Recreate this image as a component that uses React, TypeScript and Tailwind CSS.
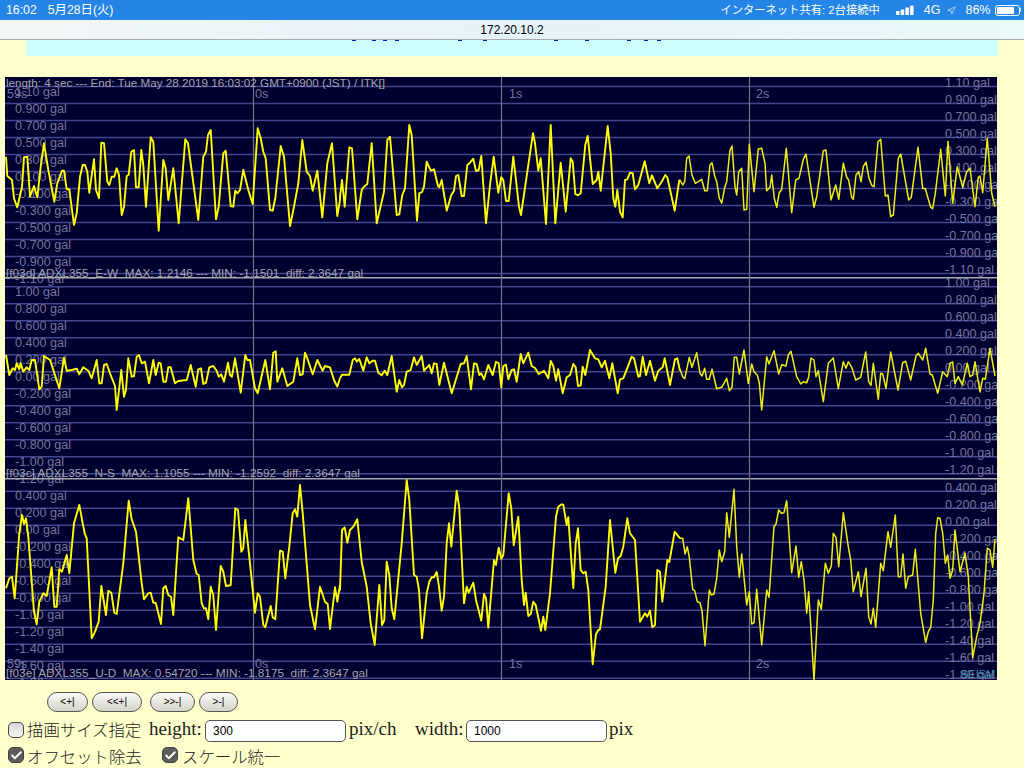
import React from 'react';
import { Check, Navigation } from 'lucide-react';

// traces were read off the screen in three crops per channel: "x,y" in crop pixels (3x)
const TRACES = [
  {
    y0: 100,
    parts: [
      '18,170 22,228 36,240 42,295 52,322 66,260 72,172 82,170 90,290 102,258 112,292 122,200 132,130 145,210 163,305 172,250 186,212 192,212 200,268 208,268 222,375 230,340 240,230 248,195 255,195 262,215 268,278 282,178 288,270 297,295 304,128 312,130 322,245 328,255 335,230 343,230 350,205 357,225 365,345 372,320 380,228 386,224 394,155 402,150 408,262 416,262 424,150 430,195 438,320 452,112 460,125 476,392 490,180 497,205 505,300 520,205 536,370 556,118 564,130 595,360 610,170 618,155 624,105 632,90 648,358 656,320 670,160 677,152 692,318 700,320 706,272 712,280 720,270 730,210 745,270 758,312 773,85 782,115 790,155 797,175 810,330 818,332 826,295 842,138 852,170 870,378 882,320 895,250 907,120 920,215 930,228 938,272 952,212 967,352 982,190 996,130 1012,348 1020,300',
      '0,290 6,240 14,320 28,142 36,145 52,358 65,270 72,260 82,252 95,130 110,370 132,275 142,120 150,110 170,345 178,343 187,285 195,265 208,75 215,105 231,362 238,280 246,276 252,260 260,185 272,212 282,208 294,258 298,262 305,240 320,332 334,285 342,272 348,228 355,225 365,288 372,288 382,195 390,188 400,176 408,213 416,210 424,168 438,370 450,255 461,170 475,278 484,232 490,240 498,303 506,303 520,170 537,320 543,345 565,195 579,100 585,130 595,212 602,175 618,372 632,75 646,370 662,188 677,335 692,175 698,185 706,282 714,286 722,280 736,135 743,108 758,252 770,240 775,215 782,272 803,78 812,160 820,295 826,320 832,270 840,335 848,352 855,240 862,238 870,218 878,220 885,268 895,255 914,184 928,250 936,226 952,265 965,245 976,225 982,232 1004,332 1018,240',
      '0,240 8,255 14,245 20,175 27,168 36,225 46,250 55,245 65,238 74,272 82,272 90,195 96,188 104,228 110,245 118,295 125,310 134,262 140,245 150,150 156,138 165,260 170,285 176,215 185,205 192,330 200,328 208,133 222,275 235,147 245,145 255,190 260,272 270,262 275,225 283,295 290,322 298,278 305,268 319,145 335,338 347,240 357,235 370,178 378,162 402,322 410,290 430,152 438,150 453,300 467,255 476,298 490,190 500,232 506,240 515,292 520,298 528,225 536,215 543,245 550,200 558,186 567,235 575,256 582,260 594,125 602,118 616,288 624,285 632,350 640,345 655,175 662,162 686,300 694,292 714,142 728,265 736,266 752,322 758,326 766,280 782,148 796,288 804,124 818,310 832,200 848,262 860,215 870,205 885,320 895,232 900,228 908,278 922,115 935,280 945,320',
    ],
  },
  {
    y0: 280,
    parts: [
      '18,225 28,285 38,265 45,270 50,250 58,268 62,250 70,275 80,262 88,270 95,240 105,240 118,328 125,320 132,228 150,240 178,325 192,233 200,272 215,270 230,266 238,283 250,262 265,272 275,295 290,240 298,310 305,310 312,255 320,252 330,280 345,318 350,390 364,270 372,350 378,330 385,235 395,290 402,288 410,230 417,225 425,250 435,245 447,310 460,240 467,285 476,248 482,250 490,305 498,305 505,262 512,262 525,310 535,303 560,300 572,255 587,320 595,268 603,265 610,312 618,308 628,262 640,258 650,272 656,290 664,283 672,305 684,248 690,285 696,290 705,235 722,338 736,225 742,240 750,240 765,325 773,340 796,240 810,328 820,218 827,214 832,305 847,265 862,318 880,305 892,235 900,285 908,283 915,218 922,235 938,283 952,240 968,272 975,258 990,262 1002,300 1012,320 1020,295',
      '0,295 6,284 14,284 28,284 38,240 45,235 50,245 58,237 70,272 80,232 88,250 98,242 105,242 115,278 125,286 134,272 142,285 155,228 170,335 178,300 186,322 192,315 200,275 212,270 222,232 230,255 245,228 252,272 268,255 275,280 282,250 290,252 298,315 312,248 335,340 362,252 372,250 380,228 393,328 402,250 410,252 418,285 424,280 432,298 445,255 458,285 468,245 476,250 484,322 490,258 498,254 505,298 515,270 522,268 530,305 542,222 550,250 565,218 575,258 585,264 596,282 612,272 625,295 632,243 640,258 648,302 655,268 668,340 680,292 690,285 700,252 707,262 714,318 722,316 728,260 736,285 750,210 765,235 775,238 785,262 795,242 808,295 817,250 833,340 840,298 850,295 875,230 882,235 895,290 900,288 908,230 918,285 930,243 945,302 955,272 968,262 974,235 990,315 1005,238 1012,235 1020,272',
      '0,268 8,290 14,296 28,232 36,262 50,218 60,280 66,288 74,265 80,298 88,298 96,268 110,326 125,322 140,295 148,332 156,322 163,232 170,232 178,282 192,210 205,310 215,252 222,275 232,285 238,310 245,390 260,230 267,252 282,212 296,282 305,254 318,258 325,225 333,214 350,290 362,312 370,305 380,308 386,290 393,234 402,240 408,290 415,272 430,365 445,250 460,234 475,326 490,245 498,265 505,245 515,262 527,300 542,292 557,216 566,305 573,316 580,250 595,358 602,280 608,282 618,325 632,216 654,330 668,248 677,244 692,300 708,228 715,220 728,240 737,205 750,282 757,285 773,340 788,275 802,290 810,250 818,246 825,310 835,290 847,315 862,250 870,290 878,285 885,245 900,336 908,295 916,298 930,205 945,288',
    ],
  },
  {
    y0: 480,
    parts: [
      '18,325 28,295 36,290 44,355 58,160 66,105 72,132 78,115 85,170 102,395 110,433 118,365 130,340 140,348 155,262 163,380 170,380 178,268 186,275 200,225 208,280 222,130 238,75 248,130 254,160 260,175 275,475 285,455 296,425 304,318 318,405 325,332 334,338 343,398 350,402 370,250 386,62 395,118 408,155 425,310 432,358 445,340 452,338 460,368 467,368 483,432 490,325 497,318 505,345 513,350 520,405 535,172 550,180 565,55 580,240 590,282 596,285 605,370 612,385 618,385 625,418 632,320 640,345 648,450 662,258 670,275 678,318 692,316 706,85 714,90 724,215 730,205 736,120 750,250 765,398 773,340 780,350 790,435 796,442 812,378 818,412 826,418 840,212 848,215 856,295 868,200 878,100 885,88 892,110 900,15 908,100 930,375 945,448 960,320 975,365 983,372 990,447 1005,322 1012,365 1020,315',
      '0,330 6,150 14,142 22,188 30,150 40,140 52,118 65,245 80,320 92,430 104,495 118,315 126,435 133,420 140,245 148,285 155,385 163,418 185,190 200,0 208,60 222,285 230,290 237,330 246,475 260,340 268,305 275,292 282,292 290,276 297,320 305,392 312,350 320,190 327,130 334,200 350,32 358,85 372,370 380,320 386,338 400,308 408,360 424,422 432,342 438,355 445,443 462,240 468,255 476,203 484,236 490,225 506,40 514,85 521,196 535,110 545,300 552,375 557,338 565,408 572,402 580,365 587,375 603,452 610,410 616,450 630,340 648,110 655,80 665,73 670,74 680,135 685,112 700,325 707,190 714,145 722,270 730,280 737,275 745,330 758,553 768,462 775,450 780,448 797,320 810,120 826,278 834,235 842,228 850,200 862,115 870,160 885,180 900,425 915,400 922,410 930,392 937,442 945,435 952,270 960,275 967,365 982,240 988,246 1004,155 1020,175',
      '0,175 8,175 15,222 22,200 28,232 38,328 44,332 52,365 60,368 66,392 75,497 88,330 94,345 102,342 110,295 118,210 125,245 134,215 140,98 148,172 162,28 170,200 178,292 185,222 200,375 208,335 215,432 222,428 230,328 245,495 260,330 267,352 282,140 288,132 296,90 304,100 312,98 320,62 335,278 348,198 356,292 364,245 372,300 380,400 386,335 402,600 415,360 424,388 436,250 445,280 454,258 460,160 468,172 476,260 490,98 505,200 512,240 520,335 535,275 543,350 558,265 566,410 573,432 580,385 587,442 602,250 610,272 624,155 632,202 646,105 655,290 662,290 669,222 677,325 685,290 698,285 706,208 722,400 737,487 745,455 752,442 760,360 767,160 773,113 780,115 788,160 796,250 803,225 810,295 818,270 825,150 840,275 855,220 865,290 878,533 890,470 900,430 912,340 922,204 930,210 938,262 945,178',
    ],
  },
];

const CROP_X = [0, 340, 680];
const CHART_LEFT = 5;
const CHART_TOP = 77;

const CHANNELS = [
  {
    gridTop: 9.5,
    info: '[f03d] ADXL355_E-W  MAX: 1.2146 --- MIN: -1.1501  diff: 2.3647 gal',
    infoY: 199.5,
    scale: ['1.10', '0.900', '0.700', '0.500', '0.300', '0.100', '-0.100', '-0.300', '-0.500', '-0.700', '-0.900', '-1.10'],
  },
  {
    gridTop: 209.7,
    info: '[f03c] ADXL355_N-S  MAX: 1.1055 --- MIN: -1.2592  diff: 2.3647 gal',
    infoY: 399.5,
    scale: ['1.00', '0.800', '0.600', '0.400', '0.200', '0.00', '-0.200', '-0.400', '-0.600', '-0.800', '-1.00', '-1.20'],
  },
  {
    gridTop: 414.3,
    info: '[f03e] ADXL355_U-D  MAX: 0.54720 --- MIN: -1.8175  diff: 2.3647 gal',
    infoY: 599.5,
    scale: ['0.400', '0.200', '0.00', '-0.200', '-0.400', '-0.600', '-0.800', '-1.00', '-1.20', '-1.40', '-1.60', '-1.80'],
  },
];

const TIME_MARKS = [
  { label: '59s', x: 2 },
  { label: '0s', x: 250 },
  { label: '1s', x: 504 },
  { label: '2s', x: 751 },
];

const toPoints = (crop: string, x0: number, y0: number) =>
  crop.split(' ').map((p) => {
    const [x, y] = p.split(',').map(Number);
    return `${(x0 + x / 3 - CHART_LEFT).toFixed(1)},${(y0 + y / 3 - CHART_TOP).toFixed(1)}`;
  });

function SeismoChart() {
  return (
    <svg width="992" height="603" className="block bg-[#000030] font-['Liberation_Sans',Arial,sans-serif] text-[12.6px]">
      {CHANNELS.map((ch) => (
        <g key={ch.gridTop}>
          {ch.scale.map((v, i) => {
            const y = ch.gridTop + i * 17;
            return (
              <g key={v}>
                <line x1="0" x2="992" y1={y} y2={y} stroke="#45458f" strokeWidth="1.5" />
                <text x="10" y={y + 9} fill="#74749c">{v} gal</text>
                <text x="940" y={y + 0.5} fill="#74749c">{v} gal</text>
              </g>
            );
          })}
        </g>
      ))}
      <rect x="0" y="200" width="992" height="1.5" fill="#a8a8b0" />
      <rect x="0" y="401" width="992" height="1.5" fill="#a8a8b0" />
      {[248, 496, 744].map((x) => (
        <line key={x} x1={x + 0.5} x2={x + 0.5} y1="0" y2="603" stroke="#72728a" strokeWidth="1.2" />
      ))}
      {TIME_MARKS.map((t) => (
        <g key={t.label} fill="#74749c">
          <text x={t.x} y="21">{t.label}</text>
          <text x={t.x} y="591">{t.label}</text>
        </g>
      ))}
      {TRACES.map((trace) => {
        let last = '';
        return trace.parts.map((crop, i) => {
          const pts = toPoints(crop, CROP_X[i], trace.y0);
          const all = last ? [last, ...pts] : pts;
          last = pts[pts.length - 1];
          return (
            <polyline
              key={`${trace.y0}-${i}`}
              points={all.join(' ')}
              fill="none"
              stroke={i === 2 ? '#eeee10' : '#ffff00'}
              strokeWidth={i === 2 ? 1.5 : 1.9}
              strokeLinejoin="round"
            />
          );
        });
      })}
      <text x="1" y="10" fill="#a4a4ac" className="text-[11.7px]">length: 4 sec --- End: Tue May 28 2019 16:03:02 GMT+0900 (JST) / ITK[]</text>
      {CHANNELS.map((ch) => (
        <text key={ch.info} x="1" y={ch.infoY} fill="#a4a4ac" xmlSpace="preserve" className="text-[11.8px] whitespace-pre">{ch.info}</text>
      ))}
      <text x="956" y="601" fill="#3f93b0" className="text-[11px]">SEISM</text>
    </svg>
  );
}

function StatusBar() {
  return (
    <div className="h-5 bg-[#2585e6] text-white text-[11.3px] flex items-center justify-between pl-[6px] pr-[3px] font-['Liberation_Sans','Noto_Sans_CJK_JP',sans-serif]">
      <div className="flex gap-[11px] text-[12.3px]">
        <span>16:02</span>
        <span>5月28日(火)</span>
      </div>
      <div className="flex items-center">
        <span>インターネット共有: 2台接続中</span>
        <svg width="18" height="11" className="ml-[16px]" fill="#fff">
          <rect x="0" y="6" width="3.5" height="4" rx="0.5" />
          <rect x="4.7" y="4.5" width="3.5" height="5.5" rx="0.5" />
          <rect x="9.4" y="2.5" width="3.5" height="7.5" rx="0.5" />
          <rect x="14.1" y="0.5" width="3.5" height="9.5" rx="0.5" />
        </svg>
        <span className="ml-[10px] text-[12.5px]">4G</span>
        <Navigation size={9} className="ml-[7px]" strokeWidth={1.5} />
        <span className="ml-[9px] text-[12.5px]">86%</span>
        <div className="ml-[4px] flex items-center">
          <div className="w-[25px] h-[11px] rounded-[3px] border border-white p-[1px]">
            <div className="w-[85%] h-full bg-white rounded-[1px]" />
          </div>
          <div className="w-[1.5px] h-[4px] bg-white/80 rounded-r-sm" />
        </div>
      </div>
    </div>
  );
}

function RoundButton({ label, width }: { label: string; width: string }) {
  return (
    <button
      type="button"
      className={`${width} h-5 rounded-full border border-[#555] bg-gradient-to-b from-[#fafafa] to-[#d4d4c8] text-[10px] text-black leading-none font-['Liberation_Sans',sans-serif]`}
    >
      {label}
    </button>
  );
}

function CheckBox({ checked }: { checked?: boolean }) {
  return (
    <span
      className={`w-4 h-4 -mt-[2px] rounded-[5px] border border-[#444] flex items-center justify-center shrink-0 ${
        checked ? 'bg-[#5c5c5c]' : 'bg-gradient-to-b from-[#d8d8d8] to-[#f4f4f0]'
      }`}
    >
      {checked && <Check size={13} strokeWidth={3.5} className="text-white" />}
    </span>
  );
}

function SizeInput({ value }: { value: string }) {
  return (
    <input
      type="text"
      defaultValue={value}
      className="w-[141px] h-[22px] rounded-[5px] border border-[#555] bg-white pl-[7px] text-[12px] text-black font-['Liberation_Sans',sans-serif]"
    />
  );
}

export default function App() {
  return (
    <div className="h-[768px] overflow-hidden bg-[#ffffcc] text-[#222]">
      <StatusBar />
      <div className="h-5 border-b border-[#a9adad] bg-gradient-to-r from-[#f2f6f6] via-[#e4f2f9] to-[#e8f9f9] flex items-center justify-center text-[12px] text-black font-['Liberation_Sans',sans-serif]">
        172.20.10.2
      </div>

      <div className="ml-[26px] w-[972px] h-4 bg-[#ccffff]">
        <svg width="972" height="3" className="block" fill="#1010d8">
          {[326, 346, 357, 369, 432, 457, 528, 559, 601, 618, 631].map((x) => (
            <rect key={x} x={x} y="0" width="4" height="1" />
          ))}
        </svg>
      </div>

      <div className="mt-[21px] ml-[5px]">
        <SeismoChart />
      </div>

      <div className="mt-3 ml-[47px] flex">
        <RoundButton label="<+|" width="w-[41px]" />
        <div className="w-1" />
        <RoundButton label="<<+|" width="w-[50px]" />
        <div className="w-2" />
        <RoundButton label=">>-|" width="w-[45px]" />
        <div className="w-1" />
        <RoundButton label=">-|" width="w-[39px]" />
      </div>

      <div className="mt-2 ml-2 flex items-center h-[22px] text-[19px] font-['Liberation_Serif','Noto_Sans_CJK_JP',serif]">
        <CheckBox />
        <span className="ml-[3px] w-[115px] pb-1 text-[16.4px] whitespace-nowrap font-['Noto_Sans_CJK_JP',sans-serif] font-light">描画サイズ指定</span>
        <span className="ml-[7px] w-[56px] pb-1">height:</span>
        <SizeInput value="300" />
        <span className="ml-[3px] w-[66px] pb-1">pix/ch</span>
        <span className="w-[51px] pb-1">width:</span>
        <SizeInput value="1000" />
        <span className="ml-[2px] pb-1">pix</span>
      </div>

      <div className="mt-1 ml-2 flex items-center h-[20px] text-[16.4px] whitespace-nowrap font-['Noto_Sans_CJK_JP',sans-serif] font-light">
        <CheckBox checked />
        <span className="ml-[3px] w-[135px]">オフセット除去</span>
        <CheckBox checked />
        <span className="ml-1">スケール統一</span>
      </div>
    </div>
  );
}
